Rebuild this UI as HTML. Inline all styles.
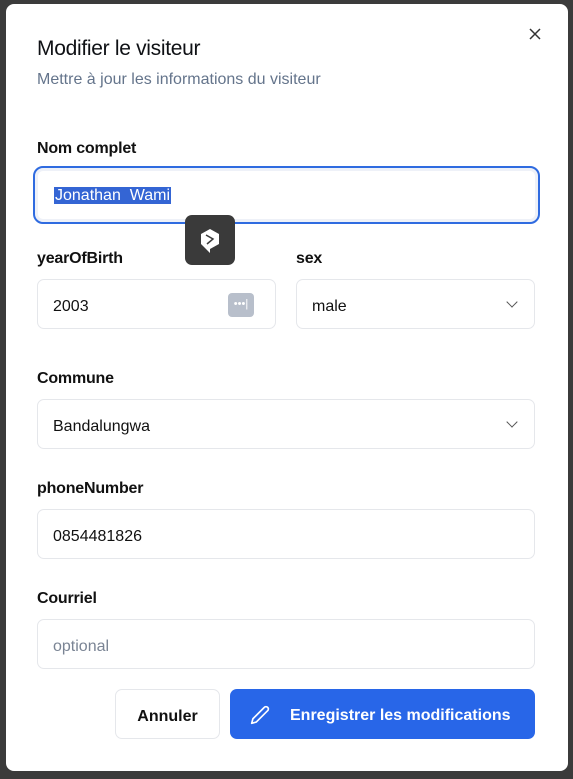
<!DOCTYPE html>
<html><head><meta charset="utf-8"><style>
*{box-sizing:border-box;margin:0;padding:0}
body{width:573px;height:779px;background:#3b3b3b;font-family:"Liberation Sans",sans-serif;position:relative;overflow:hidden}
.dlg{position:absolute;left:6px;top:4px;width:562px;height:767px;background:#fff;border-radius:8px}
.abs{position:absolute}
h1{position:absolute;left:31px;top:33px;font-size:21px;font-weight:400;color:#0f1115;letter-spacing:-0.3px}
.sub{left:31px;top:67px;font-size:16px;color:#64748b}
.lbl{font-size:16px;font-weight:700;color:#111;letter-spacing:-0.2px}
.inp{position:absolute;border:1px solid #e5e7eb;border-radius:7px;height:50px;font-size:16px;color:#111;padding-left:15px;line-height:53px}
.chev{position:absolute;right:18px;top:18px;width:8px;height:8px;border-right:1.5px solid #555;border-bottom:1.5px solid #555;transform:rotate(45deg)}
</style></head><body>
<div class="dlg">
<h1>Modifier le visiteur</h1>
<div class="abs sub">Mettre à jour les informations du visiteur</div>
<svg class="abs" style="left:522px;top:23px" width="14" height="14" viewBox="0 0 14 14"><path d="M2 2L12 12M12 2L2 12" stroke="#333" stroke-width="1.5"/></svg>
<div class="abs lbl" style="left:31px;top:136px">Nom complet</div>
<div class="inp" style="left:27px;top:162px;width:507px;height:58px;border:2px solid #2f6be0;border-radius:10px;line-height:56px;padding-left:19px;box-shadow:inset 0 0 0 3px #eef1f8"><span style="background:#3465d4;color:#fff;padding:0 1px">Jonathan &nbsp;Wami</span></div>
<div class="abs" style="left:179px;top:211px;width:50px;height:50px;background:#3a3a3a;border-radius:7px"><svg width="50" height="50" viewBox="0 0 50 50"><path d="M25 14L34 19V29L25 34V38L20 33L16 29V19Z" fill="#fff"/><path d="M21 20L28 24L22 29" stroke="#3a3a3a" stroke-width="1.5" fill="none"/></svg></div>
<div class="abs lbl" style="left:31px;top:246px">yearOfBirth</div>
<div class="abs lbl" style="left:290px;top:246px">sex</div>
<div class="inp" style="left:31px;top:275px;width:239px">2003<div class="abs" style="left:190px;top:13px;width:26px;height:24px;background:#b8bfcb;border-radius:4px;color:#fff;font-size:11px;line-height:22px;text-align:center;padding:0">•••|</div></div>
<div class="inp" style="left:290px;top:275px;width:239px">male<div class="chev"></div></div>
<div class="abs lbl" style="left:31px;top:366px">Commune</div>
<div class="inp" style="left:31px;top:395px;width:498px">Bandalungwa<div class="chev"></div></div>
<div class="abs lbl" style="left:31px;top:476px">phoneNumber</div>
<div class="inp" style="left:31px;top:505px;width:498px">0854481826</div>
<div class="abs lbl" style="left:31px;top:586px">Courriel</div>
<div class="inp" style="left:31px;top:615px;width:498px;color:#7a8494">optional</div>
<div class="abs" style="left:109px;top:685px;width:105px;height:50px;border:1px solid #e5e7eb;border-radius:7px;text-align:center;line-height:53px;font-size:16px;font-weight:700;color:#111">Annuler</div>
<div class="abs" style="left:224px;top:685px;width:305px;height:50px;background:#2866e8;border-radius:7px;color:#fff;font-size:16px;font-weight:700;line-height:54px;padding-left:60px">Enregistrer les modifications
<svg class="abs" style="left:20px;top:16px" width="20" height="20" viewBox="0 0 24 24" fill="none" stroke="#fff" stroke-width="2" stroke-linecap="round" stroke-linejoin="round"><path d="M17 3a2.85 2.83 0 1 1 4 4L7.5 20.5 2 22l1.5-5.5Z"/></svg></div>
</div>
</body></html>
